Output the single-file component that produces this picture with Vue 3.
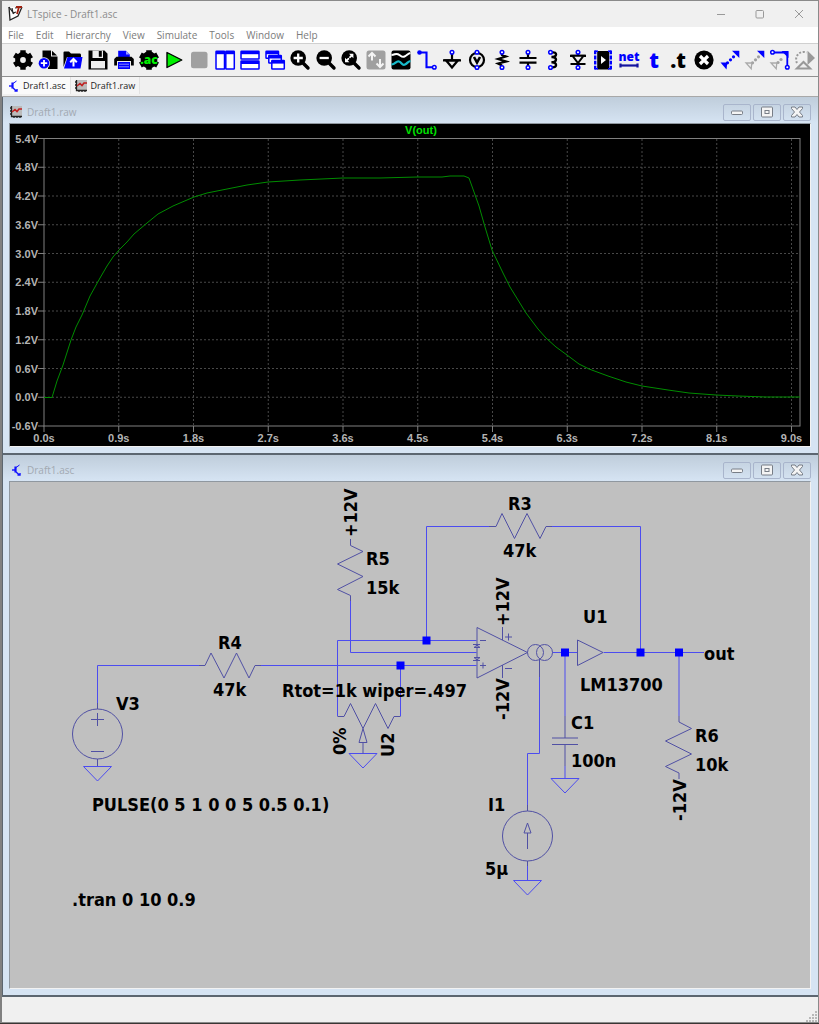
<script setup>
const menus = ['File', 'Edit', 'Hierarchy', 'View', 'Simulate', 'Tools', 'Window', 'Help']

const B = '#0000ff'
const pin = (x, y) => `<circle cx="${x}" cy="${y}" r="1.8" fill="#fff" stroke="${B}" stroke-width="1.5"/>`
const lens = (inner) =>
  `<path d="M13 13L18 18" stroke="#000" stroke-width="3.4" stroke-linecap="round"/><circle cx="8.2" cy="8" r="7.8"/>${inner}`
const bar = (x, y, w, h) =>
  `<rect x="${x}" y="${y}" width="${w}" height="${h}" rx=".5" fill="#fff" stroke="${B}" stroke-width="1.5"/><rect x="${x}" y="${y}" width="${w}" height="3" fill="${B}"/>`
const dots = (color, points) =>
  points.map(([x, y]) => `<circle cx="${x}" cy="${y}" r="1.6" fill="${color}"/>`).join('')
const diagonal = [[7.5, 12.8], [10.5, 9.8], [13.5, 6.8]]
const corner = `<path d="M12 .8H19.3V8Z" fill="${B}"/>`
const hollow = `<path d="M1 13H6.8L6.2 18.8Z" fill="#eee" stroke="#aaa" stroke-width="1.3"/>`

const tools = [
  { name: 'Settings', art: `<circle cx="10" cy="10" r="5.4" fill="none" stroke="#000" stroke-width="5"/><path d="M10 .3V4M10 16V19.7M1.4 5L4.8 7M15.2 13L18.6 15M1.4 15L4.8 13M15.2 7L18.6 5" stroke="#000" stroke-width="5.4"/>` },
  { name: 'New schematic', art: `<path d="M4.5 .5H13V6.5H19.5V19H10V9H4.5Z"/><path d="M14 .8L19 5.5H14Z"/><circle cx="6" cy="13.2" r="6" fill="#eee"/><circle cx="6" cy="13.2" r="5.3" fill="${B}"/><path d="M6 10V16.4M2.8 13.2H9.2" stroke="#fff" stroke-width="1.8"/>` },
  { name: 'Open', art: `<path d="M.5 17V2.5Q.5 1.5 1.5 1.5H6L8 3.5H17Q18 3.5 18 5V7H4Z"/><path d="M4.5 7H19.5L17.5 18.5H1Z" fill="${B}"/><path d="M10.5 16.5V10.5M7.2 12.3L10.5 9L13.8 12.3" fill="none" stroke="#fff" stroke-width="2"/>` },
  { name: 'Save', art: `<path d="M.5 .5H16.5L19.5 3.8V19.5H.5Z"/><rect x="4.5" y=".5" width="10.5" height="7.5" fill="#eee"/><rect x="10.8" y="1" width="3" height="5.8"/><rect x="3" y="11" width="14" height="7.4" fill="#eee"/>` },
  { name: 'Print', art: `<path d="M4.2 .8H12L15.8 4.5V8H4.2Z" fill="${B}"/><path d="M12 .8V4.5H15.8Z" fill="#99f"/><path d="M2.5 6.8H17.5L19.8 9V15.5H.2V9Z"/><rect x="3.5" y="11.5" width="13" height="8" fill="${B}" stroke="#eee"/><path d="M5 14.2H15M5 16.8H15" stroke="#88f"/>` },
  { name: 'AC analysis', art: `<circle cx="10" cy="10" r="8.4"/><path d="M10 .3V4M10 16V19.7M1.4 5L5 7M15 13L18.6 15M1.4 15L5 13M15 7L18.6 5" stroke="#000" stroke-width="5.6"/><text x="10" y="13.6" text-anchor="middle" font-family="Open Sans" font-weight="800" font-size="12" fill="#00f000">.ac</text>` },
  { name: 'Run', art: `<path d="M3 2.5V17.5L17.8 10Z" fill="#00f000" stroke="#000" stroke-linejoin="round" stroke-width="1.4"/>` },
  { name: 'Halt', art: `<rect x="2" y="1.8" width="16.5" height="16.5" rx="2.5" fill="#a0a0a0"/>` },
  { name: 'Tile vertically', art: bar(1, 1.2, 8.5, 17.7) + bar(10.8, 1.2, 8.5, 17.7) },
  { name: 'Tile horizontally', art: bar(1, 1.2, 18, 7.7) + bar(1, 11, 18, 7.9) },
  { name: 'Cascade', art: bar(1, 1.2, 12.5, 7) + bar(3.8, 5.5, 12.5, 7.5) + bar(6.8, 10.6, 12.5, 8.3) },
  { name: 'Zoom in', art: lens('<path d="M8.2 3.4V12.6M3.6 8H12.8" stroke="#fff" stroke-width="2.3"/>') },
  { name: 'Zoom out', art: lens('<path d="M3.6 8H12.8" stroke="#fff" stroke-width="2.3"/>') },
  { name: 'Zoom to fit', art: lens('<path d="M5.8 10.4L10.6 5.6" stroke="#fff" stroke-width="1.8"/><path d="M8 3.8H12.4V8.2ZM4 7.8V12.2H8.4Z" fill="#fff"/><path d="M6.8 6.6L9.6 9.4" stroke="#000" stroke-width="1"/>') },
  { name: 'Autorange', art: `<rect x=".5" y=".5" width="19" height="19" rx="2.5" fill="#a0a0a0"/><path d="M6 10.5V3.5M2.5 6.5L6 3L9.5 6.5M14 9V16.5M10.5 13.5L14 17L17.5 13.5" stroke="#f4f4f4" stroke-width="2" fill="none"/>` },
  { name: 'Plot waveforms', art: `<rect x=".5" y=".5" width="19" height="19" rx="2"/><path d="M.5 5C4 5 4 3 7 4.2S10.5 8 13.5 6.5S16.5 3.5 19.5 3" stroke="#fff" stroke-width="2" fill="none"/><path d="M.5 14.5C4.5 14.5 5 10.5 8 11.5S11 16 14 14.5S16.5 11.5 19.5 11" stroke="#18bccc" stroke-width="2.2" fill="none"/>` },
  { name: 'Wire', art: `<path d="M3 2.5H9.5V17.3H16" fill="none" stroke="${B}" stroke-width="2.1"/><circle cx="2.5" cy="2.5" r="2.3" fill="${B}"/>${pin(17.3, 17.3)}` },
  { name: 'Ground', art: `<path d="M10 4V10M1 10.3H19" stroke="#000" stroke-width="2.2"/><path d="M4 10.3H16L10 17.5Z" fill="none" stroke="#000" stroke-width="2.2"/>${pin(10, 2.3)}` },
  { name: 'Voltage source', art: `<circle cx="10" cy="10" r="7" fill="#eee" stroke="#000" stroke-width="2.2"/><path d="M7 7L10 12.5L13 7" stroke="#000" stroke-width="2.6" fill="none"/>${pin(10, 2.3)}${pin(10, 17.5)}` },
  { name: 'Resistor', art: `<path d="M10 4V5L14 6.5L6 9L14 11.5L6 13.5L10 15.5" fill="none" stroke="#000" stroke-width="2.2"/>${pin(10, 2.3)}${pin(10, 17.5)}` },
  { name: 'Capacitor', art: `<path d="M10 4V8M10 12V16M1.5 8H18.5M1.5 12.6H18.5" stroke="#000" stroke-width="2.2"/>${pin(10, 2.3)}${pin(10, 17.5)}` },
  { name: 'Inductor', art: `<path d="M9 2.5C14.5 1.5 14.5 7.2 8.5 7C14.5 6.5 14.5 12.7 8.5 12.3C14.5 12 14.5 18 9 17.3" fill="none" stroke="#000" stroke-width="2.4"/>${pin(7.5, 2.3)}${pin(7.5, 17.5)}` },
  { name: 'Diode', art: `<path d="M10 4V6M10 13V16M2 5.8H18M2.5 14H17.5" stroke="#000" stroke-width="2.2"/><path d="M4.5 5.8H15.5L10 13Z" fill="#eee" stroke="#000" stroke-width="2"/>${pin(10, 2.3)}${pin(10, 17.5)}` },
  { name: 'Component', art: `<rect x="4.2" y="1" width="12" height="18.5"/><path d="M2.2 .5V19.5M17.8 .5V19.5" stroke="${B}" stroke-width="2.4" stroke-dasharray="3.8 1.3"/><path d="M2 1.3H5M15 1.3H18M2 18.8H5M15 18.8H18" stroke="${B}" stroke-width="1.6"/><path d="M8 6V14L13 10Z" fill="#fff"/>` },
  { name: 'Net name', art: `<text x="10" y="11.3" text-anchor="middle" font-family="Open Sans" font-weight="800" font-size="12" fill="${B}">net</text><path d="M2 15.5H18" stroke="#1414a0" stroke-width="2.2"/><path d="M1.5 13.5V17.5M18.5 13.5V17.5" stroke="#1414a0" stroke-width="2.2"/>` },
  { name: 'Text', art: `<text x="10" y="17.8" text-anchor="middle" font-family="Open Sans" font-weight="800" font-size="21" fill="${B}">t</text>` },
  { name: 'SPICE directive', art: `<text x="9" y="17.8" text-anchor="middle" font-family="Open Sans" font-weight="800" font-size="21">.t</text>` },
  { name: 'Delete', art: `<circle cx="10" cy="10" r="9.6"/><path d="M6 6L14 14M14 6L6 14" stroke="#fff" stroke-width="3.2"/>` },
  { name: 'Move', art: dots(B, diagonal) + corner + `<path d="M.5 12.5H7.3L6.5 19.5Z" fill="${B}"/>` },
  { name: 'Drag', art: dots('#a0a0a0', diagonal) + corner + hollow },
  { name: 'Copy', art: dots('#a0a0a0', [[8, 12.5], [11, 9.5]]) + `<path d="M3 2.5H17.3V16" fill="none" stroke="${B}" stroke-width="1.8"/><path d="M11.5 1H18.5V8Z" fill="${B}"/>` + hollow + pin(2.5, 2.3) + pin(17.3, 17.3) },
  { name: 'Rotate', art: `<path d="M2 13A7.5 7.5 0 0 1 11.5 2.5" fill="none" stroke="#999" stroke-width="2" stroke-dasharray="2 1.6"/><path d="M12.5 .8L20 8L12.5 15Z" fill="#999"/><path d="M1.8 18.5H15.2L8.5 12Z" fill="#eee" stroke="#999" stroke-width="2"/>` }
]

const range = (n) => Array.from({ length: n }, (_, i) => i)
const voltages = range(11).map((i) => ({ y: 14.5 + i * 28.75, label: (5.4 - i * 0.6).toFixed(1).replace('-0.0', '0.0') + 'V' }))
const times = range(11).map((i) => ({ x: 34 + i * 74.75, label: (i * 0.9).toFixed(1) + 's' }))
const trace =
  '34,273.5 42,273.5 47,257 53,241 61,216 66,203 72,191 80,172 90,154 97,142 103,133 109,126 117,118 124,110 137,99 148,90 163,82 184,73 197,69 217,65 237,61 258,58 290,56 333,54 370,54 407,53 432,53 440,52 454,52 459,54 469,82 475,103 482,126 493,149 500,163 508,176 516,189 528,205 536,214 546,223 557,231 569,240 579,245 598,252 616,258 632,262 658,266 679,269 706,271 728,272 756,273 790,273'

const labels = [
  [218, 649, 'R4'], [213, 696, '47k'], [116, 710, 'V3'],
  [92, 811, 'PULSE(0 5 1 0 0 5 0.5 0.1)'], [72, 906, '.tran 0 10 0.9'],
  [366, 565, 'R5'], [366, 594, '15k'], [508, 510, 'R3'], [503, 557, '47k'],
  [282, 697, 'Rtot=1k wiper=.497'], [583, 623, 'U1'], [580, 691, 'LM13700'],
  [571, 729, 'C1'], [571, 767, '100n'], [695, 742, 'R6'], [695, 771, '10k'],
  [488, 811, 'I1'], [485, 875, '5µ'], [704, 660, 'out']
]
const uprights = [
  [357, 537, '+12V'], [509, 626, '+12V'], [509, 720, '-12V'],
  [686, 821, '-12V'], [346, 755, '0%'], [394, 757, 'U2']
]
const junctions = [[426.5, 640.5], [400.5, 665.5], [565, 652.5], [640.5, 652.5], [679, 652.5]]
const grounds = [[97.5, 766.5], [363, 753.5], [565, 778.5], [527.5, 880.5]]
</script>

<template>
  <div class="app">
    <header class="titlebar">
      <svg class="logo" viewBox="0 0 15 16" aria-hidden="true">
        <path d="M1 1L2 14L10 10L14 1" fill="#fff" stroke="#222" stroke-width="1.3" />
        <path d="M1 1L6 8M4 2L5 7L8 6M7 2L14 1" fill="none" stroke="#222" stroke-width="1.2" />
        <path d="M8 1H14M11 1L9 8" stroke="#a02010" stroke-width="1.8" />
      </svg>
      <span class="title">LTspice - Draft1.asc</span>
      <div class="sysbuttons">
        <button aria-label="Minimize"><svg viewBox="0 0 10 10"><path d="M1 5.5H9" /></svg></button>
        <button aria-label="Maximize"><svg viewBox="0 0 10 10"><rect x="1" y="1.5" width="7.5" height="7.5" rx="1" /></svg></button>
        <button aria-label="Close"><svg viewBox="0 0 10 10"><path d="M1 1L9 9M9 1L1 9" /></svg></button>
      </div>
    </header>

    <nav class="menubar">
      <button v-for="m in menus" :key="m">{{ m }}</button>
    </nav>

    <div class="toolbar">
      <button v-for="t in tools" :key="t.name" :aria-label="t.name">
        <svg viewBox="0 0 20 20" v-html="t.art"></svg>
      </button>
    </div>

    <div class="tabs">
      <button class="tab active">
        <svg class="small" viewBox="0 0 12 12"><path d="M2 6H5" /><path class="stem" d="M5.5 2.5V8.5" /><path class="thin" d="M6 3.5L9.5 1" /><path d="M6 8L9.5 11M7.5 11H10V9" /></svg>
        Draft1.asc
      </button>
      <button class="tab">
        <svg class="small" viewBox="0 0 12 12"><rect x="2" y="0" width="10" height="10" fill="#bbb" /><path class="axis" d="M1.5 0V10.5H12M0 2H2M0 5H2M0 8H2M4 12V10M7 12V10M10 12V10" /><path class="plot" d="M2 6L5 3.5L7 5.5L9 3H12" /></svg>
        Draft1.raw
      </button>
    </div>

    <main class="workspace">
      <section class="child">
        <div class="childbar">
          <svg class="small" viewBox="0 0 12 12"><rect x="2" y="0" width="10" height="10" fill="#bbb" /><path class="axis" d="M1.5 0V10.5H12M0 2H2M0 5H2M0 8H2M4 12V10M7 12V10M10 12V10" /><path class="plot" d="M2 6L5 3.5L7 5.5L9 3H12" /></svg>
          <span>Draft1.raw</span>
          <div class="childbuttons">
            <button aria-label="Minimize"><svg viewBox="0 0 14 14"><rect x="1.5" y="6" width="11" height="3.5" rx="1" /></svg></button>
            <button aria-label="Restore"><svg viewBox="0 0 14 14"><rect x="1.5" y="2" width="11" height="10" rx="1" /><rect x="5" y="5.5" width="4" height="3" /></svg></button>
            <button aria-label="Close"><svg viewBox="0 0 14 14"><path d="M1.5 2H5L7 4.5L9 2H12.5V3.5L9.5 7L12.5 10.5V12H9L7 9.5L5 12H1.5V10.5L4.5 7L1.5 3.5Z" /></svg></button>
          </div>
        </div>
        <svg class="chart" viewBox="0 0 800 322">
          <g class="grid">
            <path v-for="v in voltages.slice(1, -1)" :key="v.y" :d="`M34 ${v.y}H790`" />
            <path v-for="t in times.slice(1)" :key="t.x" :d="`M${t.x} 15V302`" />
          </g>
          <g class="frame">
            <rect x="34" y="14.5" width="756" height="287.5" />
            <path v-for="v in voltages" :key="v.y" :d="`M28 ${v.y}H34`" />
            <path v-for="t in times" :key="t.x" :d="`M${t.x} 302V308`" />
          </g>
          <text v-for="v in voltages" :key="v.y" class="end" x="28" :y="v.y + 4">{{ v.label }}</text>
          <text v-for="t in times" :key="t.x" :x="t.x" y="318">{{ t.label }}</text>
          <text class="signal" x="411" y="10">V(out)</text>
          <polyline class="trace" :points="trace" />
        </svg>
      </section>

      <section class="child">
        <div class="childbar">
          <svg class="small" viewBox="0 0 12 12"><path d="M2 6H5" /><path class="stem" d="M5.5 2.5V8.5" /><path class="thin" d="M6 3.5L9.5 1" /><path d="M6 8L9.5 11M7.5 11H10V9" /></svg>
          <span>Draft1.asc</span>
          <div class="childbuttons">
            <button aria-label="Minimize"><svg viewBox="0 0 14 14"><rect x="1.5" y="6" width="11" height="3.5" rx="1" /></svg></button>
            <button aria-label="Restore"><svg viewBox="0 0 14 14"><rect x="1.5" y="2" width="11" height="10" rx="1" /><rect x="5" y="5.5" width="4" height="3" /></svg></button>
            <button aria-label="Close"><svg viewBox="0 0 14 14"><path d="M1.5 2H5L7 4.5L9 2H12.5V3.5L9.5 7L12.5 10.5V12H9L7 9.5L5 12H1.5V10.5L4.5 7L1.5 3.5Z" /></svg></button>
          </div>
        </div>
        <svg class="schematic" viewBox="10 482 800 506">
          <g class="wire">
            <path d="M97.5 703V665.5H199M261 665.5H476.5" />
            <path d="M350.5 601V652.5H476.5" />
            <path d="M337.5 716V640.5H476.5" />
            <path d="M400.5 716V665.5" />
            <path d="M426.5 640.5V526.5H489M552 526.5H640.5V652.5" />
            <path d="M552.5 652.5H577.5M603.5 652.5H704M565 652.5V716M565 766V778.5" />
            <path d="M679 652.5V716M539.5 677V753.5H527.5V805M527.5 866V880.5" />
            <path v-for="[x, y] in grounds" :key="x" :d="`M${x - 14} ${y}h28l-14 14.5z`" />
          </g>
          <g class="part">
            <path d="M199 665.5H205L211 653L224 678L236.5 653L249 678L255 665.5H261" />
            <path d="M489 526.5H496L502 513.5L514.5 538.5L527 513.5L540 538.5L546 526.5H552" />
            <path d="M350.5 539V545.5L363 551.5L337.5 564L363 576.5L337.5 589.5L350.5 595.5V601" />
            <path d="M679 716V722L691.5 728.5L665.5 741L691.5 754L665.5 766.5L679 773V779" />
            <path d="M337.5 716.5H344L350.5 703.5L363 728.5L375.5 703.5L388 728.5L394 716.5H400.5" />
            <path d="M363 728.5L359 742.5H367ZM363 742.5V753.5" />
            <circle cx="97.5" cy="734" r="25" />
            <path d="M97.5 703V709M97.5 759V766M91 719.5H104M97.5 713V726M91 751.5H104" />
            <path d="M477 627.5L527.5 652.5L477 678Z" />
            <path d="M480 640.5H486M480 665.5H486M483 662.5V668.5M505 637H512M508.5 633.5V640.5M505 668.5H512" />
            <path d="M502.5 627V640M502.5 665V678" />
            <path d="M473 644.5H480M474 647.5H480L477 645ZM473 660.5H480M474 657.5H480L477 660Z" />
            <circle cx="535.5" cy="652.5" r="8" />
            <circle cx="544.5" cy="652.5" r="8" />
            <path d="M539.5 659V677M577.5 640V665.5L603 652.5Z" />
            <path d="M565 716V738M552 738H578M552 744.5H578M565 744.5V766" />
            <circle cx="527.5" cy="836" r="25" />
            <path d="M527.5 805V811M527.5 861V866M527.5 849V833M527.5 823L524 833H531Z" />
          </g>
          <rect v-for="[x, y] in junctions" :key="x" class="junction" :x="x - 4" :y="y - 4" width="8" height="8" />
          <text v-for="([x, y, s], i) in labels" :key="i" :x="x" :y="y">{{ s }}</text>
          <text v-for="([x, y, s], i) in uprights" :key="'u' + i" :transform="`translate(${x} ${y}) rotate(-90)`">{{ s }}</text>
        </svg>
      </section>
    </main>

    <footer class="status">
      <svg viewBox="0 0 12 12" aria-hidden="true"><path d="M9 1h2v2h-2zM6 4h2v2h-2zM9 4h2v2h-2zM3 7h2v2h-2zM6 7h2v2h-2zM9 7h2v2h-2zM0 10h2v2h-2zM3 10h2v2h-2zM6 10h2v2h-2zM9 10h2v2h-2z" /></svg>
    </footer>
  </div>
</template>

<style>
body {
  background: #3a3634;
}
</style>

<style scoped>
.app {
  display: flex;
  flex-direction: column;
  min-height: calc(100vh - 1px);
  box-sizing: border-box;
  border: 1px solid #8a8a8a;
  border-left: 2px solid #808080;
  background: #f0f0f0;
  font-family: "Open Sans", "Noto Sans", sans-serif;
  font-size: 10px;
  color: #7c7c7c;
}
button {
  border: 0;
  padding: 0;
  background: none;
  font: inherit;
  color: inherit;
}
svg {
  display: block;
}
.titlebar {
  display: flex;
  align-items: center;
  height: 26px;
  padding-left: 6px;
}
.logo {
  width: 15px;
  height: 16px;
}
.title {
  margin-left: 4px;
  color: #8c8c8c;
}
.sysbuttons {
  display: flex;
  margin-left: auto;
}
.sysbuttons button {
  display: grid;
  place-items: center;
  width: 39px;
  height: 26px;
}
.sysbuttons svg {
  width: 10px;
  height: 10px;
  fill: none;
  stroke: #999;
}
.menubar {
  display: flex;
  gap: 12px;
  height: 16px;
  padding: 0 6px;
  background: #fff;
  border-bottom: 1px solid #d0d0d0;
}
.toolbar {
  display: grid;
  grid-template-columns: repeat(32, 1fr);
  height: 33px;
  box-sizing: border-box;
  padding: 0 0 1px 8px;
  border-bottom: 1px solid #909090;
}
.toolbar button {
  display: grid;
  place-items: center;
}
.toolbar svg {
  width: 20px;
  height: 20px;
  overflow: visible;
}
.tabs {
  display: flex;
  height: 19px;
  padding-left: 1px;
  border-bottom: 1px solid #a8a8a8;
}
.tab {
  display: flex;
  align-items: center;
  gap: 4px;
  height: 17px;
  padding: 0 4px;
  border-right: 1px solid #e2e2e2;
  background: #f4f4f4;
  font-size: 9px;
  color: #222;
}
.tab.active {
  background: #fafafa;
}
.small {
  width: 12px;
  height: 12px;
  fill: none;
  stroke: #1010ff;
  stroke-width: 1.4;
}
.small .stem {
  stroke-width: 2.2;
}
.small .thin {
  stroke-width: 1;
}
.small .axis {
  stroke: #222;
  stroke-width: 1.3;
}
.small .plot {
  stroke: #c02020;
  stroke-width: 1.6;
}
.small rect {
  stroke: none;
}
.workspace {
  flex: 1;
  background: #5c6670;
}
.child {
  margin: 0 0 2px 1px;
  padding: 0 7px 6px 6px;
  background: linear-gradient(#bfcddb, #d6e4f3 26px);
}
.childbar {
  display: flex;
  align-items: center;
  height: 26px;
  padding: 4px 0 0 1px;
  box-sizing: border-box;
  color: #a2a9b2;
}
.childbar span {
  margin-left: 5px;
}
.childbuttons {
  display: flex;
  gap: 2px;
  margin-left: auto;
}
.childbuttons button {
  display: grid;
  place-items: center;
  width: 28px;
  height: 17px;
  box-sizing: border-box;
  border: 1px solid #a9b5cc;
  border-radius: 2px;
}
.childbuttons svg {
  width: 14px;
  height: 14px;
  fill: #f4f4f4;
  stroke: #777d86;
}
.chart,
.schematic {
  width: 100%;
  border: 1px solid #8f979f;
  border-right-color: #f2f2f2;
  border-bottom-color: #f2f2f2;
  box-sizing: border-box;
}
.chart {
  background: #000;
  font: bold 11px "Liberation Sans", Arial, sans-serif;
}
.chart text {
  fill: #b4b4b4;
  text-anchor: middle;
}
.chart .end {
  text-anchor: end;
}
.chart .signal {
  fill: #00e000;
}
.grid path {
  stroke: #484848;
  stroke-dasharray: 2 2;
}
.frame {
  fill: none;
  stroke: #808080;
}
.trace {
  fill: none;
  stroke: #008c00;
}
.schematic {
  background: #c0c0c0;
  font: bold 18px "DejaVu Sans Condensed", "DejaVu Sans", sans-serif;
}
.wire {
  fill: none;
  stroke: #4c4cf0;
}
.part {
  fill: none;
  stroke: #5050a4;
}
.junction {
  fill: #0000ff;
}
.status {
  display: flex;
  justify-content: flex-end;
  align-items: flex-end;
  height: 25px;
}
.status svg {
  width: 12px;
  height: 12px;
  fill: #b8b8b8;
}
</style>
